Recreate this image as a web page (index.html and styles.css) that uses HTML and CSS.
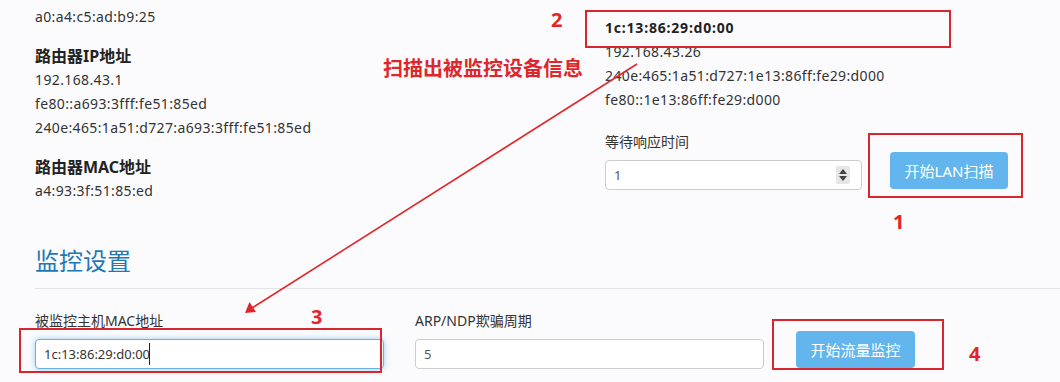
FILE: index.html
```html
<!DOCTYPE html>
<html>
<head>
    <title>监控设置</title>
    <link rel="stylesheet" href="styles.css">
</head>
<body>
    <div class="page">
        <div class="top">
            <div class="col-left">
                <div class="group">
                    <p>a0:a4:c5:ad:b9:25</p>
                </div>
                <div class="group">
                    <h4>路由器IP地址</h4>
                    <p>192.168.43.1</p>
                    <p>fe80::a693:3fff:fe51:85ed</p>
                    <p>240e:465:1a51:d727:a693:3fff:fe51:85ed</p>
                </div>
                <div class="group">
                    <h4>路由器MAC地址</h4>
                    <p>a4:93:3f:51:85:ed</p>
                </div>
            </div>

            <div class="col-right">
                <div class="device">
                    <h4>1c:13:86:29:d0:00</h4>
                    <p>192.168.43.26</p>
                    <p>240e:465:1a51:d727:1e13:86ff:fe29:d000</p>
                    <p>fe80::1e13:86ff:fe29:d000</p>
                </div>
                <div class="scan-row">
                    <div class="field">
                        <label>等待响应时间</label>
                        <div class="number-box">
                            <input type="text" class="input" value="1">
                            <span class="spinner">
                                <svg width="10" height="16" viewBox="0 0 10 16">
                                    <path d="M5 2 L9 7 L1 7 Z" fill="#444"/>
                                    <path d="M5 14 L9 9 L1 9 Z" fill="#444"/>
                                </svg>
                            </span>
                        </div>
                    </div>
                    <button class="btn btn-scan">开始LAN扫描</button>
                </div>
            </div>
        </div>

        <h2 class="section-title">监控设置</h2>

        <div class="monitor-row">
            <div class="field">
                <label>被监控主机MAC地址</label>
                <div class="number-box">
                    <input type="text" class="input focused" value="1c:13:86:29:d0:00">
                    <span class="caret"></span>
                </div>
            </div>
            <div class="field">
                <label>ARP/NDP欺骗周期</label>
                <input type="text" class="input" value="5">
            </div>
            <button class="btn btn-monitor">开始流量监控</button>
        </div>

        <!-- annotations -->
        <div class="mark box-1"></div>
        <div class="mark box-2"></div>
        <div class="mark box-3"></div>
        <div class="mark box-4"></div>
        <span class="num num-1">1</span>
        <span class="num num-2">2</span>
        <span class="num num-3">3</span>
        <span class="num num-4">4</span>
        <span class="note">扫描出被监控设备信息</span>
        <svg class="arrow" width="1060" height="382" viewBox="0 0 1060 382">
            <line x1="637" y1="64" x2="252" y2="308" stroke="#e0262b" stroke-width="1.6"/>
            <path d="M245 313 L249.5 302 L256 312 Z" fill="#e0262b"/>
        </svg>
    </div>
</body>
</html>
```

FILE: styles.css
```css
/* Reset and base styles */
* {
    margin: 0;
    padding: 0;
    box-sizing: border-box;
    font-family: "Noto Sans", "Noto Sans CJK SC", sans-serif;
}

body {
    background-color: #fbfbfd;
    color: #333;
    font-size: 14px;
}

.page {
    position: relative;
    width: 1060px;
    height: 382px;
    overflow: hidden;
    padding-left: 35px;
}

p {
    line-height: 24px;
    letter-spacing: 0.37px;
}

h4 {
    font-size: 16px;
    font-weight: 700;
    line-height: 24px;
    color: #222;
}

/* Top info section */
.top {
    display: grid;
    grid-template-columns: 570px 1fr;
}

.col-left {
    padding-top: 5px;
}

.group {
    margin-bottom: 15px;
}

.group:last-child {
    margin-bottom: 0;
}

.col-right {
    padding-top: 16px;
}

.device h4 {
    font-size: 14px;
    letter-spacing: 0.8px;
}

.scan-row {
    display: flex;
    align-items: flex-end;
    gap: 28px;
    margin-top: 20px;
}

.field label {
    display: block;
    line-height: 20px;
    margin-bottom: 8px;
}

.scan-row .field {
    width: 257px;
}

.number-box {
    position: relative;
}

.spinner {
    position: absolute;
    right: 12px;
    top: 6px;
    width: 14px;
    height: 18px;
    background: #e6e6e6;
    border-radius: 2px;
    display: flex;
    align-items: center;
    justify-content: center;
}

.caret {
    position: absolute;
    left: 114px;
    top: 4px;
    width: 1px;
    height: 22px;
    background: #222;
}

.input {
    display: block;
    width: 100%;
    height: 30px;
    padding: 0 8px;
    border: 1px solid #ccc;
    border-radius: 4px;
    background: white;
    font-size: 13px;
    color: #555;
    outline: none;
}

.input.focused {
    border-color: #66afe9;
    box-shadow: 0 0 6px rgba(102, 175, 233, 0.6);
    color: #333;
}

.btn {
    height: 37px;
    border: none;
    border-radius: 4px;
    background: #62b5ed;
    color: white;
    font-size: 15px;
    cursor: pointer;
}

.btn-scan {
    width: 118px;
    margin-bottom: 1px;
}

/* Monitor section */
.section-title {
    margin-top: 43px;
    font-size: 24px;
    font-weight: 400;
    line-height: 30px;
    color: #1f78b4;
    padding-bottom: 12px;
    border-bottom: 1px solid #e3e3e6;
    margin-bottom: 22px;
}

.monitor-row {
    display: grid;
    grid-template-columns: 349px 349px 120px;
    column-gap: 31px;
    align-items: end;
}

.btn-monitor {
    margin-left: 1px;
    margin-bottom: 1px;
}

/* Annotations */
.mark {
    position: absolute;
    border: 2px solid #d9262c;
}

.box-1 { left: 868px; top: 133px; width: 155px; height: 65px; }
.box-2 { left: 585px; top: 10px; width: 366px; height: 38px; }
.box-3 { left: 19px; top: 328px; width: 363px; height: 45px; }
.box-4 { left: 772px; top: 319px; width: 172px; height: 51px; }

.num {
    position: absolute;
    color: #e0262b;
    font-size: 20px;
    font-weight: 700;
    line-height: 20px;
}

.num-1 { left: 893px; top: 212px; }
.num-2 { left: 551px; top: 10px; }
.num-3 { left: 311px; top: 307px; }
.num-4 { left: 969px; top: 344px; }

.note {
    position: absolute;
    left: 383px;
    top: 58px;
    color: #e0262b;
    font-size: 20px;
    font-weight: 700;
    line-height: 22px;
}

.arrow {
    position: absolute;
    left: 0;
    top: 0;
    pointer-events: none;
}
```
